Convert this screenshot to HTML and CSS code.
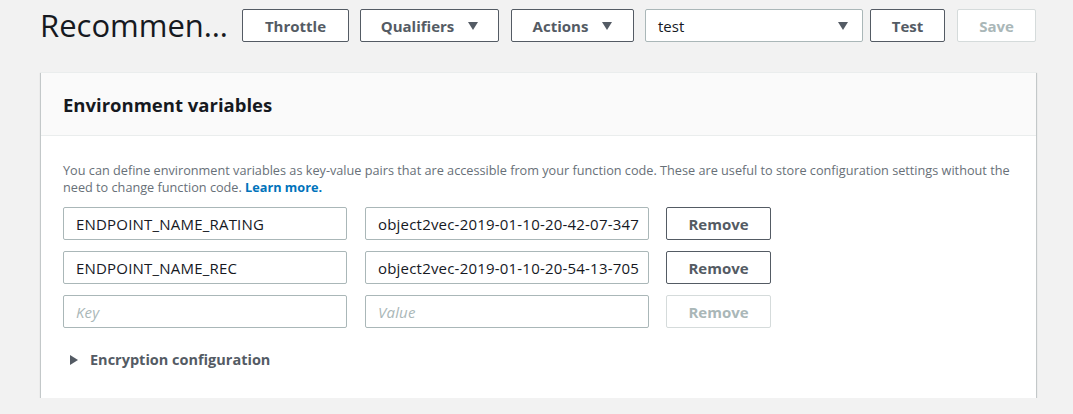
FILE: index.html
```html
<!DOCTYPE html>
<html lang="en">
<head>
<meta charset="utf-8">
<title>Recommendations</title>
<link rel="stylesheet" href="styles.css">
</head>
<body>
<div class="page">
  <header class="topbar">
    <h1 class="fn-title">Recommen…</h1>
    <div class="toolbar">
      <button class="btn btn-throttle">Throttle</button>
      <button class="btn btn-menu btn-qualifiers">Qualifiers <span class="caret"></span></button>
      <button class="btn btn-menu btn-actions">Actions <span class="caret"></span></button>
      <div class="select"><span>test</span><span class="caret"></span></div>
      <button class="btn btn-test">Test</button>
      <button class="btn btn-save" disabled>Save</button>
    </div>
  </header>

  <section class="card">
    <div class="card-head">
      <h2>Environment variables</h2>
    </div>
    <div class="card-body">
      <p class="desc">You can define environment variables as key-value pairs that are accessible from your function code. These are useful to store configuration settings without the need to change function code. <a href="#" class="learn">Learn more.</a></p>
      <div class="rows">
        <div class="row">
          <input class="field" type="text" value="ENDPOINT_NAME_RATING">
          <input class="field" type="text" value="object2vec-2019-01-10-20-42-07-347">
          <button class="btn btn-remove">Remove</button>
        </div>
        <div class="row">
          <input class="field" type="text" value="ENDPOINT_NAME_REC">
          <input class="field" type="text" value="object2vec-2019-01-10-20-54-13-705">
          <button class="btn btn-remove">Remove</button>
        </div>
        <div class="row">
          <input class="field" type="text" placeholder="Key">
          <input class="field" type="text" placeholder="Value">
          <button class="btn btn-remove" disabled>Remove</button>
        </div>
      </div>
      <div class="expander">
        <span class="tri"></span>
        <span>Encryption configuration</span>
      </div>
    </div>
  </section>
</div>
</body>
</html>
```

FILE: styles.css
```css
* { box-sizing: border-box; }

html, body {
  margin: 0;
  background: #f2f2f2;
  font-family: "Open Sans", "Noto Sans", sans-serif;
  color: #16191f;
}

.page {
  padding: 0 37px 0 40px;
}

.topbar {
  display: flex;
  align-items: center;
  padding-top: 9px;
}

.fn-title {
  flex: 1;
  margin: 0;
  font-size: 31px;
  font-weight: 400;
  line-height: 33px;
  color: #16191f;
  white-space: nowrap;
}

.toolbar {
  display: flex;
  align-items: center;
}

.btn {
  height: 33px;
  padding: 0 16px;
  border: 1px solid #545b64;
  border-radius: 2px;
  background: #fff;
  color: #545b64;
  font-family: inherit;
  font-size: 15px;
  font-weight: 700;
  display: inline-flex;
  align-items: center;
  justify-content: center;
  gap: 14px;
  cursor: pointer;
}

.btn:disabled {
  border-color: #d5dbdb;
  color: #aab7b8;
  cursor: default;
}

.caret {
  width: 0;
  height: 0;
  border-left: 5.5px solid transparent;
  border-right: 5.5px solid transparent;
  border-top: 8px solid #545b64;
}

.btn-throttle { width: 107px; }
.btn-qualifiers { width: 139px; margin-left: 11px; }
.btn-actions { width: 123px; margin-left: 12px; }
.btn-test { width: 75px; margin-left: 7px; }
.btn-save { width: 79px; margin-left: 12px; }

.select {
  width: 218px;
  height: 33px;
  margin-left: 11px;
  padding: 0 14px 0 12px;
  background: #fff;
  border: 1px solid #aab7b8;
  border-radius: 2px;
  display: flex;
  align-items: center;
  justify-content: space-between;
  font-size: 15px;
  color: #16191f;
}

.card {
  margin-top: 30px;
  margin-left: 1px;
  background: #fff;
  border-top: 1px solid #eaeded;
  box-shadow: 0 1px 1px 0 rgba(0, 28, 36, 0.3),
              1px 1px 1px 0 rgba(0, 28, 36, 0.15),
              -1px 1px 1px 0 rgba(0, 28, 36, 0.15);
}

.card-head {
  background: #fafafa;
  border-bottom: 1px solid #eaeded;
  padding: 0 22px;
  height: 63px;
  display: flex;
  align-items: center;
}

.card-head h2 {
  margin: 0;
  font-size: 18.5px;
  font-weight: 700;
  color: #16191f;
}

.card-body {
  padding: 26px 17px 28px 22px;
}

.desc {
  margin: 0 0 11px;
  font-size: 12.7px;
  line-height: 17px;
  color: #687078;
}

.learn {
  color: #0073bb;
  font-weight: 700;
  text-decoration: none;
}

.rows {
  display: flex;
  flex-direction: column;
  gap: 11px;
}

.row {
  display: flex;
  align-items: center;
}

.field {
  width: 284px;
  height: 33px;
  margin-right: 18px;
  padding: 0 4px 0 12px;
  border: 1px solid #aab7b8;
  border-radius: 2px;
  font-family: inherit;
  font-size: 15px;
  letter-spacing: 0.2px;
  color: #16191f;
  background: #fff;
}

.field::placeholder {
  color: #aab7b8;
  font-style: italic;
}

.btn-remove {
  width: 105px;
  margin-left: -1px;
}

.expander {
  display: flex;
  align-items: center;
  gap: 12px;
  margin-top: 22px;
  padding-left: 7px;
  font-size: 14.5px;
  font-weight: 700;
  color: #545b64;
  line-height: 20px;
}

.tri {
  width: 0;
  height: 0;
  border-top: 5px solid transparent;
  border-bottom: 5px solid transparent;
  border-left: 8px solid #545b64;
}
```
